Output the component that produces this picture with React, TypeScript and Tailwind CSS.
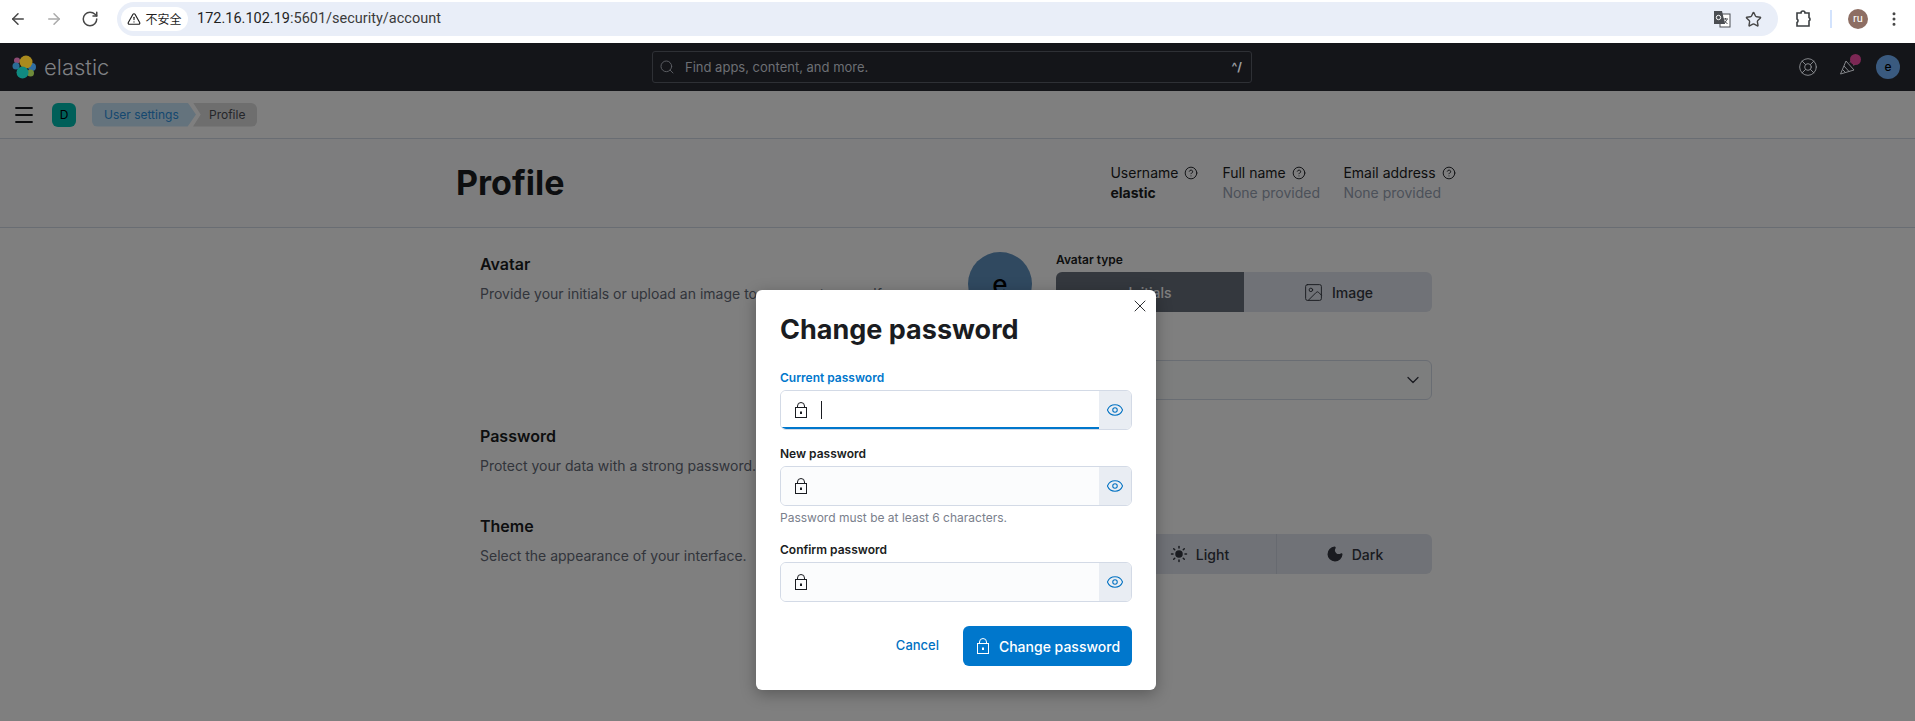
import { ArrowLeft, ArrowRight, RotateCw, Star, TriangleAlert, EllipsisVertical, Search, Menu, CircleHelp, Image, ChevronDown, Sun, Moon, X, Eye, LifeBuoy } from "lucide-react";

function LockIcon({ className }: { className?: string }) {
  return (
    <svg viewBox="0 0 16 16" fill="none" stroke="currentColor" strokeWidth="1" className={className}>
      <rect x="2.5" y="5.5" width="11" height="10" />
      <path d="M4.5 5.5V4a3.5 3.5 0 0 1 7 0v1.5" />
      <rect x="7" y="9.5" width="2" height="2.5" fill="currentColor" stroke="none" />
    </svg>
  );
}

function ElasticLogo() {
  return (
    <svg viewBox="0 0 24 24" className="h-6 w-6">
      <circle cx="5" cy="5.5" r="3" fill="#8d4a73" />
      <circle cx="4" cy="11" r="3.5" fill="#2a6d96" />
      <circle cx="20" cy="12" r="4" fill="#2f6ea3" />
      <circle cx="18.5" cy="18" r="3.5" fill="#6f8b3a" />
      <circle cx="14" cy="7" r="6.5" fill="#a98a1e" />
      <circle cx="10.5" cy="17.5" r="6" fill="#0f8a80" />
    </svg>
  );
}

function PuzzleIcon() {
  return (
    <svg viewBox="0 0 20 20" fill="none" stroke="#3c4043" strokeWidth="1.6" className="h-5 w-5">
      <path d="M3 4h4a2 2 0 0 1 4 0h4v4.5a2 2 0 0 1 0 3.5V17H3v-3.5a2 2 0 0 0 0-3.5Z" />
    </svg>
  );
}

function TranslateIcon() {
  return (
    <svg viewBox="0 0 18 18" className="h-[18px] w-[18px]">
      <rect x="7" y="4" width="10" height="13" fill="#fff" stroke="#4a4d52" strokeWidth="1" />
      <path d="M1 1h8l3 13H1Z" fill="#4a4d52" />
      <circle cx="5.5" cy="7.5" r="2.2" fill="none" stroke="#fff" strokeWidth="1" />
      <path d="M10 9h5M12.5 8v1.5M14 9.5 11 14M11 10.5l3.5 3.5" fill="none" stroke="#4a4d52" strokeWidth="1" />
    </svg>
  );
}

function MegaphoneIcon() {
  return (
    <svg viewBox="0 0 18 18" fill="none" stroke="#85878b" strokeWidth="1" className="h-[18px] w-[18px]">
      <path d="M1.5 16 7 3l8 9Z" />
      <path d="M5 8l5.5 6M3.5 11.5l3.5 3.5" />
      <path d="M11 4.5l2-2M14 7l2-.5" />
    </svg>
  );
}

function PasswordField({ label, focused, hint }: { label: string; focused?: boolean; hint?: string }) {
  return (
    <div>
      <label className={`block h-[18px] text-[12px] leading-[18px] font-semibold ${focused ? "text-[#0077cc]" : "text-[#1a1c21]"}`}>
        {label}
      </label>
      <div className="mt-[3px] flex h-10 overflow-hidden rounded-md border border-[#d3dae6]">
        <div className={`relative flex flex-1 items-center pl-3 ${focused ? "bg-white" : "bg-[#fbfcfd]"}`}>
          <LockIcon className="h-4 w-4 text-[#1a1c21]" />
          {focused && <span className="ml-3 h-[18px] w-px bg-[#1a1c21]" />}
          {focused && <span className="absolute right-0 bottom-0 left-0 h-0.5 bg-[#0077cc]" />}
        </div>
        <div className="flex w-8 items-center justify-center bg-[#e9edf3]">
          <Eye className="h-[18px] w-[18px] text-[#0071c2]" strokeWidth={1.4} />
        </div>
      </div>
      {hint && <p className="mt-[3px] h-[18px] text-[12px] leading-[18px] text-[#7a808c]">{hint}</p>}
    </div>
  );
}

function HeaderInfo({ label, value, strong, className }: { label: string; value: string; strong?: boolean; className: string }) {
  return (
    <div className={className}>
      <div className="flex items-center gap-1.5 text-[14px] leading-5 text-[#1a1c21]">
        {label}
        <CircleHelp className="h-3.5 w-3.5" strokeWidth={1.6} />
      </div>
      <div className={`text-[14px] leading-5 ${strong ? "font-bold text-[#1a1c21]" : "text-[#98a2b3]"}`}>{value}</div>
    </div>
  );
}

function FormRow({ title, text, className }: { title: string; text: string; className: string }) {
  return (
    <div className={className}>
      <h3 className="text-[16px] leading-6 font-semibold text-[#1a1c21]">{title}</h3>
      <p className="mt-2 text-[14px] leading-5 text-[#646a77]">{text}</p>
    </div>
  );
}

export default function App() {
  return (
    <div className="relative h-[721px] w-[1915px] overflow-hidden bg-white font-['Inter',sans-serif]">
      {/* browser toolbar */}
      <div className="flex h-[43px] items-center bg-white pb-[5px] font-['Roboto',sans-serif]">
        <div className="flex w-[117px] items-center pl-[9px] text-[#474747]">
          <ArrowLeft className="h-[18px] w-[18px]" />
          <ArrowRight className="ml-[18px] h-[18px] w-[18px] text-[#aaa]" />
          <RotateCw className="ml-[18px] h-[18px] w-[18px]" />
        </div>
        <div className="flex h-[34px] w-[1661px] items-center rounded-full bg-[#e9eef8] pl-1">
          <div className="flex h-6 w-[67px] items-center justify-center gap-1 rounded-full bg-white font-['Noto_Sans_CJK_SC',sans-serif] text-[12px] text-[#1f1f1f]">
            <TriangleAlert className="h-3.5 w-3.5" />
            不安全
          </div>
          <span className="ml-[9px] text-[14.5px] text-[#1f1f1f]">
            172.16.102.19<span className="text-[#3b3b3b]">:5601/security/account</span>
          </span>
          <div className="ml-auto flex items-center pr-4">
            <TranslateIcon />
            <Star className="ml-[14px] h-[17px] w-[17px] text-[#474747]" />
          </div>
        </div>
        <div className="flex flex-1 items-center pl-4">
          <PuzzleIcon />
          <span className="ml-4 h-[18px] w-0.5 bg-[#d3e3fd]" />
          <span className="ml-4 flex h-5 w-5 items-center justify-center rounded-full bg-[#8d6e63] text-[11px] text-white">ru</span>
          <EllipsisVertical className="ml-[17px] h-[18px] w-[18px] text-[#474747]" />
        </div>
      </div>

      {/* kibana header */}
      <div className="flex h-[48px] items-center bg-[#141519] pl-3">
        <div className="flex w-[640px] items-center">
          <ElasticLogo />
          <span className="ml-2 text-[22px] leading-none font-light text-[#808184]">elastic</span>
        </div>
        <div className="flex h-8 w-[600px] items-center rounded-[3px] border border-[#2e3035] pl-[6px] text-[#5f6166]">
          <Search className="h-4 w-4" strokeWidth={1.4} />
          <span className="ml-[10px] pt-px text-[13px] text-[#6d6f74]">Find apps, content, and more.</span>
          <span className="mr-[9px] ml-auto text-[12px] font-bold text-[#9a9ca0]">^/</span>
        </div>
        <div className="ml-[546px] flex items-center">
          <LifeBuoy className="h-5 w-5 text-[#85878b]" strokeWidth={1.2} />
          <div className="relative ml-[21px]">
            <MegaphoneIcon />
            <span className="absolute -top-[4px] -right-[4px] h-[11px] w-[11px] rounded-full bg-[#7c2754]" />
          </div>
          <span className="ml-[19px] flex h-6 w-6 items-center justify-center rounded-full bg-[#3a5a7f] text-[12px] font-medium text-black">e</span>
        </div>
      </div>

      {/* breadcrumb bar */}
      <div className="flex h-[48px] items-center border-b border-[#d3dae6] bg-white pl-3">
        <Menu className="h-6 w-6 text-[#1a1c21]" strokeWidth={1.8} />
        <span className="ml-4 flex h-6 w-6 items-center justify-center rounded-md bg-[#00bfb3] text-[12px] text-black">D</span>
        <div className="ml-4 flex h-6 items-center text-[12px]">
          <span className="flex h-full w-[104px] items-center rounded-l-md bg-[#c9e6fa] pl-3 text-[#2a90e0] [clip-path:polygon(0_0,92%_0,100%_50%,92%_100%,0_100%)]">
            User settings
          </span>
          <span className="-ml-[3px] flex h-full w-[64px] items-center rounded-r-md bg-[#dcdcdc] pl-4 text-[#4a4c55] [clip-path:polygon(0_0,100%_0,100%_100%,0_100%,12%_50%)]">
            Profile
          </span>
        </div>
      </div>

      {/* page header */}
      <div className="h-[89px] border-b border-[#d3dae6] bg-[#fafbfd]">
        <div className="flex w-full pt-[20px] pl-[456px]">
          <h1 className="text-[34px] leading-[48px] font-bold text-[#1a1c21]">Profile</h1>
          <HeaderInfo className="ml-[546px] w-[112px] pt-1" label="Username" value="elastic" strong />
          <HeaderInfo className="w-[121px] pt-1" label="Full name" value="None provided" />
          <HeaderInfo className="pt-1" label="Email address" value="None provided" />
        </div>
      </div>

      {/* page body */}
      <div className="flex pl-[480px]">
        <div className="w-[488px] pt-6">
          <FormRow className="h-[172px]" title="Avatar" text="Provide your initials or upload an image to represent yourself." />
          <FormRow className="h-[90px]" title="Password" text="Protect your data with a strong password." />
          <FormRow className="" title="Theme" text="Select the appearance of your interface." />
        </div>
        <div className="w-[464px] pt-6">
          <div className="flex">
            <div className="flex h-16 w-16 items-center justify-center rounded-full bg-[#6092c0] text-[26px] font-medium text-black">e</div>
            <div className="ml-6 flex-1">
              <label className="block h-4 text-[12px] leading-4 font-semibold text-[#1a1c21]">Avatar type</label>
              <div className="mt-1 flex h-10 overflow-hidden rounded-md text-[14px] font-medium">
                <div className="flex flex-1 items-center justify-center bg-[#69707d] text-white">Initials</div>
                <div className="flex flex-1 items-center justify-center gap-2 bg-[#e0e5ee] text-[#343741]">
                  <Image className="h-[21px] w-[21px]" strokeWidth={1.1} />
                  Image
                </div>
              </div>
            </div>
          </div>
          <div className="mt-[44px] ml-[88px] flex h-10 items-center justify-end rounded-md border border-[#d3dae6] bg-[#fbfcfd] pr-2">
            <ChevronDown className="h-5 w-5 text-[#343741]" strokeWidth={1.5} />
          </div>
          <div className="mt-[134px] ml-[88px] flex h-10 overflow-hidden rounded-md bg-[#e0e5ee] text-[14px] font-medium text-[#343741]">
            <div className="w-[67px]" />
            <div className="flex w-[154px] items-center justify-center gap-2 border-r border-[#cfd5e0]">
              <Sun className="h-[18px] w-[18px]" fill="currentColor" />
              Light
            </div>
            <div className="flex flex-1 items-center justify-center gap-2">
              <Moon className="h-[18px] w-[18px]" fill="currentColor" />
              Dark
            </div>
          </div>
        </div>
      </div>

      {/* overlay + modal */}
      <div className="absolute inset-x-0 top-[91px] bottom-0 bg-[rgba(0,0,0,0.5)]" />
      <div className="absolute top-[290px] left-[756px] h-[400px] w-[400px] rounded-md bg-white px-6 pt-5 shadow-[0_4px_16px_rgba(0,0,0,0.3)]">
        <X className="absolute top-[6px] right-[6px] h-5 w-5 text-[#1a1c21]" strokeWidth={1.1} />
        <h2 className="text-[27px] leading-10 font-bold text-[#1a1c21]">Change password</h2>
        <div className="mt-[19px]">
          <PasswordField label="Current password" focused />
        </div>
        <div className="mt-[15px]">
          <PasswordField label="New password" hint="Password must be at least 6 characters." />
        </div>
        <div className="mt-[14px]">
          <PasswordField label="Confirm password" />
        </div>
        <div className="mt-6 flex items-center justify-end">
          <span className="mr-6 text-[13px] font-medium text-[#0071c2]">Cancel</span>
          <button className="flex h-10 w-[169px] items-center justify-center gap-2 rounded-md bg-[#0077cc] text-[14px] font-medium text-white">
            <LockIcon className="h-4 w-4" />
            Change password
          </button>
        </div>
      </div>
    </div>
  );
}
